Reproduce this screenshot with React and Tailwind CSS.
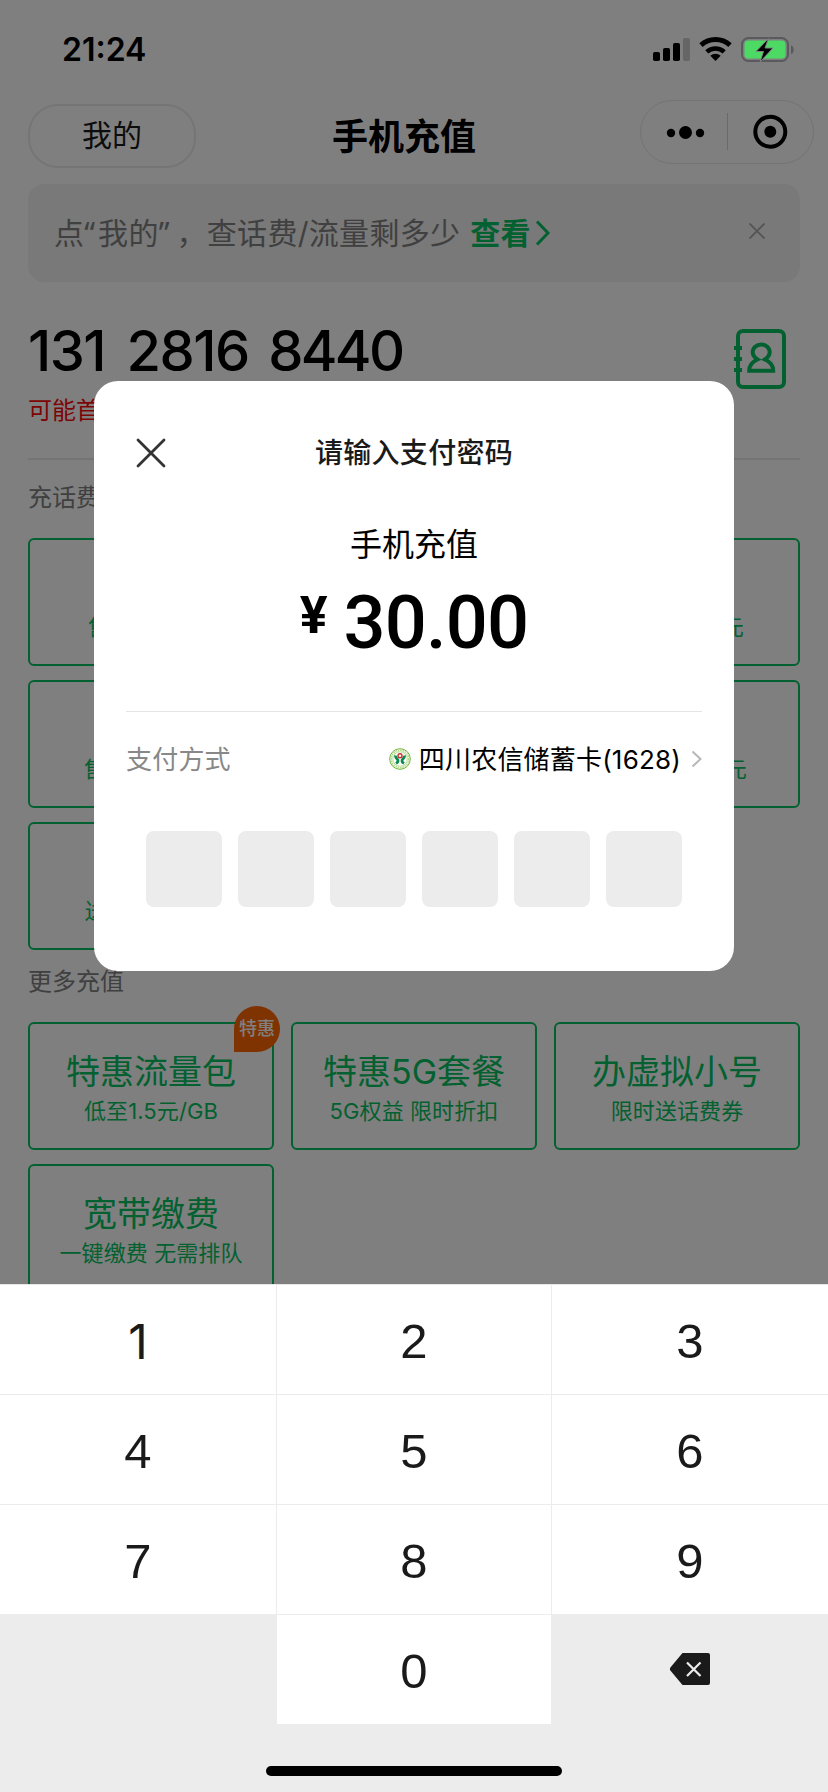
import React from 'react';

const carrierPlans = [
  { name: '10元', note: '售价: 9.98元' },
  { name: '20元', note: '售价:19.96元' },
  { name: '30元', note: '售价:29.94元' },
  { name: '50元', note: '售价:49.90元' },
  { name: '80元', note: '售价:79.84元' },
  { name: '100元', note: '售价: 99.80元' },
  { name: '200元', note: '送话费优惠券' },
];

const moreServices = [
  { name: '特惠流量包', note: '低至1.5元/GB', badge: '特惠' },
  { name: '特惠5G套餐', note: '5G权益 限时折扣' },
  { name: '办虚拟小号', note: '限时送话费券' },
  { name: '宽带缴费', note: '一键缴费 无需排队' },
];

const digits = ['1', '2', '3', '4', '5', '6', '7', '8', '9'];

const StatusIcons = () => (
  <svg width="144" height="30" viewBox="651 35 144 30" fill="none">
    <rect x="653" y="52" width="7" height="9" rx="1.8" fill="#000" />
    <rect x="663" y="48" width="7" height="13" rx="1.8" fill="#000" />
    <rect x="673" y="43" width="7" height="18" rx="1.8" fill="#000" />
    <rect x="683" y="38" width="7" height="23" rx="1.8" fill="#666" />
    <path d="M701 45.2a21.5 21.5 0 0 1 29 0" stroke="#000" strokeWidth="5" />
    <path d="M706.8 51.9a13 13 0 0 1 17.4 0" stroke="#000" strokeWidth="4.6" />
    <path d="M715.5 61l-5.2-5.2a7.6 7.6 0 0 1 10.4 0z" fill="#000" />
    <rect x="742" y="38" width="46" height="23" rx="6.5" stroke="#5a5a5e" strokeWidth="2" />
    <rect x="744.5" y="40.5" width="41" height="18" rx="4" fill="#4cd964" />
    <path d="M791 45.5c3.6 1 3.6 7.5 0 8.5z" fill="#5a5a5e" />
    <path d="M768.5 38.5l-12.5 13h7.5l-3.5 10.5 13-14h-8z" fill="#000" stroke="#808080" strokeWidth="1" />
  </svg>
);

const ContactsIcon = () => (
  <svg width="54" height="62" viewBox="733 328 54 62" fill="none" stroke="#07c160">
    <rect x="738" y="331" width="46" height="56" rx="5" strokeWidth="4" />
    <path d="M734 348h8M734 359h8M734 370h8" strokeWidth="4" />
    <path
      d="M757.5 359.5c-3-2-4.8-4.2-4.8-7.4a8.5 7.7 0 0 1 17 0c0 3.2-1.8 5.4-4.8 7.4 5.3 2.3 8.3 5.3 8.3 11.2h-24c0-5.9 3-8.9 8.3-11.2z"
      strokeWidth="4"
    />
  </svg>
);

const BankLogo = () => (
  <svg width="24" height="24" viewBox="0 0 24 24" fill="none">
    <circle cx="12" cy="12" r="10.3" stroke="#6fb43a" strokeWidth="1" />
    <circle cx="12" cy="12" r="8.7" stroke="#b5d98c" strokeWidth="1.6" strokeDasharray="1.6 0.8" />
    <circle cx="12" cy="12" r="7.2" stroke="#8cc65a" strokeWidth="0.6" />
    <path d="M7.6 8.4c-.6 3.2 2.6 3.2 2.4 5.4-.1 1.4-1 2-2 2.6" stroke="#0b8a50" strokeWidth="2.8" />
    <path d="M16.4 8.4c.6 3.2-2.6 3.2-2.4 5.4.1 1.4 1 2 2 2.6" stroke="#0b8a50" strokeWidth="2.8" />
    <circle cx="12" cy="8.8" r="2" fill="#fff" stroke="#d0312d" strokeWidth="1.4" />
  </svg>
);

function ServiceCard({ name, note, badge }) {
  return (
    <div className="relative flex h-32 flex-col items-center rounded-md border-2 border-[#07c160] pt-6 text-[#07c160]">
      <span className="text-[34px] leading-[48px]">{name}</span>
      <span className="text-[22px] leading-[30px] tracking-[0.1px]">{note}</span>
      {badge && (
        <span className="absolute -top-[18px] -right-2 flex h-[46px] w-[46px] items-center justify-center rounded-full rounded-bl-md bg-[#ff6600] pb-px text-[18px] font-medium leading-none text-white">
          {badge}
        </span>
      )}
    </div>
  );
}

function RechargePage() {
  return (
    <div className="h-full bg-white">
      {/* Room for the status bar */}
      <div className="h-[100px]" />

      <header className="flex h-16 items-start pl-7 pr-3.5">
        <div className="mt-1 flex h-16 w-[168px] shrink-0 items-center justify-center rounded-[30px] border-2 border-[#ebebeb] pb-0.5 text-[30px] text-[#1a1a1a]">
          我的
        </div>
        <h1 className="mt-[5px] ml-[136px] text-[36px] font-bold leading-[64px] text-black">手机充值</h1>
        <div className="ml-auto flex h-16 w-[174px] shrink-0 items-center rounded-full border border-[#e6e6e6]">
          <svg width="172" height="62" viewBox="641 101 172 62">
            <circle cx="671" cy="133" r="4.2" />
            <circle cx="685.5" cy="132.5" r="6.5" />
            <circle cx="700" cy="133" r="4.2" />
            <path d="M727.5 113v37" stroke="#d4d4d4" />
            <circle cx="770.3" cy="131.7" r="15" fill="none" stroke="#000" strokeWidth="4" />
            <circle cx="770.3" cy="131.7" r="6" />
          </svg>
        </div>
      </header>

      <div className="mx-7 mt-5 flex h-[98px] items-center rounded-2xl bg-[#f2f2f2] pl-[26px] pr-[35px] text-[30px] tracking-[0.3px]">
        <span className="text-[#808080]">
          点<span className="font-['Noto_Sans'] tracking-[3px]">“</span>我的
          <span className="font-['Noto_Sans'] tracking-[7px]">”</span>，查话费/流量剩多少
        </span>
        <span className="ml-2.5 font-bold text-[#07c160]">查看</span>
        <svg width="16" height="26" viewBox="0 0 16 26" fill="none" className="ml-1">
          <path d="M2 1.5l11 11.5-11 11.5" stroke="#07c160" strokeWidth="3" />
        </svg>
        <svg width="16" height="16" viewBox="0 0 16 16" className="mb-1 ml-auto">
          <path d="M.5.5l15 15M15.5.5l-15 15" stroke="#a8a8a8" strokeWidth="1.8" />
        </svg>
      </div>

      <section className="mx-7 mt-11 flex h-[134px] justify-between border-b-2 border-[#e8e8e8]">
        <div>
          <div className="text-[56px] font-medium leading-[50px] tracking-[-1.5px] text-black">
            131 <span className="ml-2">2816 </span>
            <span className="ml-1.5 tracking-[-2.7px]">8440</span>
          </div>
          <div className="mt-[19px] text-[24px] leading-8 text-[#fa0a0a]">可能首次</div>
        </div>
        <div className="mt-0.5 mr-[13px]">
          <ContactsIcon />
        </div>
      </section>

      <section className="mx-7">
        <h2 className="mt-5 h-[58px] text-[24px] leading-[35px] text-[#808080]">充话费</h2>
        <div className="grid grid-cols-3 gap-x-[17px] gap-y-3.5">
          {carrierPlans.map((plan) => (
            <ServiceCard key={plan.name} {...plan} />
          ))}
        </div>
      </section>

      <section className="mx-7">
        <h2 className="mt-3.5 h-[58px] text-[24px] leading-[36px] text-[#808080]">更多充值</h2>
        <div className="grid grid-cols-3 gap-x-[17px] gap-y-3.5">
          {moreServices.map((service) => (
            <ServiceCard key={service.name} {...service} />
          ))}
        </div>
      </section>
    </div>
  );
}

function PasswordDialog() {
  return (
    <div className="mx-auto mt-[381px] h-[590px] w-[640px] shrink-0 rounded-3xl bg-white px-8">
      <div className="flex h-[144px] items-center">
        <svg width="30" height="30" viewBox="0 0 30 30" className="ml-2.5 shrink-0">
          <path d="M2 2l26 26M28 2L2 28" stroke="#333" strokeWidth="2.8" strokeLinecap="round" />
        </svg>
        <h3 className="mr-10 flex-1 text-center text-[28px] font-medium tracking-[0.3px] text-[#1a1a1a]">请输入支付密码</h3>
      </div>

      <p className="text-center text-[32px] leading-10 text-black">手机充值</p>

      <div className="mt-[15px] flex h-[132px] items-start justify-center border-b border-[#e5e5e5] font-['Roboto'] text-black">
        <span className="mr-4 mt-2.5 text-[52px] font-bold leading-[52px]">¥</span>
        <span className="mt-[5px] text-[74px] font-medium leading-[75px] tracking-[-0.8px]">30.00</span>
      </div>

      <div className="mt-[29px] flex h-9 items-center text-[26px]">
        <span className="tracking-[0.2px] text-[#888]">支付方式</span>
        <span className="ml-auto mr-[7px]">
          <BankLogo />
        </span>
        <span className="tracking-[0.2px] text-black">四川农信储蓄卡(1628)</span>
        <svg width="11" height="18" viewBox="0 0 11 18" fill="none" className="ml-2.5">
          <path d="M1.5 1.5L9.5 9l-8 7.5" stroke="#b8b8b8" strokeWidth="2" />
        </svg>
      </div>

      <div className="mt-[54px] flex justify-center gap-4">
        {[0, 1, 2, 3, 4, 5].map((i) => (
          <div key={i} className="h-[76px] w-[76px] rounded-lg bg-[#ececec]" />
        ))}
      </div>
    </div>
  );
}

function NumberPad() {
  return (
    <div className="mt-auto h-[508px] shrink-0 border-t border-[#e8e8e8] bg-[#ececec] font-['Liberation_Sans'] text-[49px] text-[#1a1a1a]">
      <div className="grid grid-cols-[276px_274px_276px] gap-x-px gap-y-px">
        {digits.map((d) => (
          <div
            key={d}
            className={
              d === '1'
                ? "flex h-[109px] items-center justify-center bg-white pt-1 font-['Inter'] text-[48px]"
                : 'flex h-[109px] items-center justify-center bg-white pt-1'
            }
          >
            {d}
          </div>
        ))}
        <div />
        <div className="flex h-[109px] items-center justify-center bg-white pt-1">0</div>
        <div className="flex items-center justify-center">
          <svg width="40" height="32" viewBox="0 0 40 32" className="mb-0.5">
            <path d="M12.5 0H38a2 2 0 0 1 2 2v28a2 2 0 0 1-2 2H12.5L.8 18a3 3 0 0 1 0-4z" fill="#1a1a1a" />
            <path d="M17 9.5l13.5 13.5M30.5 9.5L17 23" stroke="#ececec" strokeWidth="2.2" />
          </svg>
        </div>
      </div>
      <div className="mx-auto mt-[42px] h-2.5 w-[296px] rounded-full bg-black" />
    </div>
  );
}

function App() {
  return (
    <div className="relative h-[1792px] w-[828px] overflow-hidden font-['Inter','Noto_Sans_CJK_SC',sans-serif]">
      <RechargePage />

      {/* Dimmed layer with the payment dialog and keypad */}
      <div className="absolute inset-0 flex flex-col bg-black/50">
        <PasswordDialog />
        <NumberPad />
      </div>

      {/* Status bar stays above the dim layer */}
      <div className="absolute inset-x-0 top-0 flex h-[100px] items-center justify-between pl-[62px] pr-[33px]">
        <span className="text-[32px] font-semibold leading-none text-black">21:24</span>
        <StatusIcons />
      </div>
    </div>
  );
}

export default App;
